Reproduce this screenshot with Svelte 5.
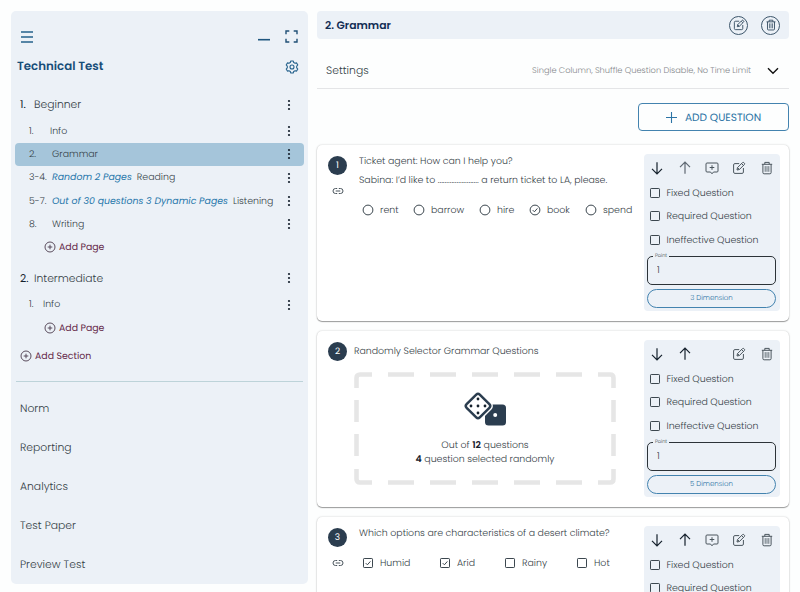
<script lang="ts">
  interface Page {
    no: string;
    title: string;
    rule?: string;
    active?: boolean;
  }

  interface Section {
    title: string;
    compact?: boolean;
    pages: Page[];
  }

  interface Option {
    label: string;
    width: number;
    checked?: boolean;
  }

  interface Question {
    kind: 'radio' | 'checkbox' | 'random';
    lines: string[];
    options: Option[];
    dimension: number;
    first?: boolean;
  }

  const sections: Section[] = [
    {
      title: 'Beginner',
      pages: [
        { no: '1.', title: 'Info' },
        { no: '2.', title: 'Grammar', active: true },
        { no: '3-4.', title: 'Reading', rule: 'Random 2 Pages' },
        { no: '5-7.', title: 'Listening', rule: 'Out of 30 questions 3 Dynamic Pages' },
        { no: '8.', title: 'Writing' }
      ]
    },
    { title: 'Intermediate', compact: true, pages: [{ no: '1.', title: 'Info' }] }
  ];

  const links = ['Norm', 'Reporting', 'Analytics', 'Test Paper', 'Preview Test'];
  const flags = ['Fixed Question', 'Required Question', 'Ineffective Question'];

  const questions: Question[] = [
    {
      kind: 'radio',
      first: true,
      lines: [
        'Ticket agent: How can I help you?',
        'Sabina: I’d like to ........................ a return ticket to LA, please.'
      ],
      options: [
        { label: 'rent', width: 51 },
        { label: 'barrow', width: 66 },
        { label: 'hire', width: 50 },
        { label: 'book', width: 56, checked: true },
        { label: 'spend', width: 50 }
      ],
      dimension: 3
    },
    { kind: 'random', lines: ['Randomly Selector Grammar Questions'], options: [], dimension: 5 },
    {
      kind: 'checkbox',
      lines: ['Which options are characteristics of a desert climate?'],
      options: [
        { label: 'Humid', width: 77, checked: true },
        { label: 'Arid', width: 65, checked: true },
        { label: 'Rainy', width: 72 },
        { label: 'Hot', width: 40 }
      ],
      dimension: 3
    }
  ];
</script>

{#snippet dots()}
  <svg class="dots" viewBox="0 0 4 12" fill="#14202c">
    <circle cx="2" cy="2" r="1.1" /><circle cx="2" cy="6" r="1.1" /><circle cx="2" cy="10" r="1.1" />
  </svg>
{/snippet}

{#snippet plusCircle()}
  <svg width="12" height="12" viewBox="0 0 12 12" fill="none" stroke="#4a3a4c" stroke-width="0.9">
    <circle cx="6" cy="6" r="5" /><path d="M6 3.7v4.6M3.7 6h4.6" />
  </svg>
{/snippet}

{#snippet edit()}
  <svg width="14" height="14" viewBox="0 0 14 14" fill="none" stroke="currentColor" stroke-width="1" stroke-linejoin="round">
    <path d="M7.2 2.6H2.9Q1.6 2.6 1.6 3.9v7.2q0 1.3 1.3 1.3h7.2q1.3 0 1.3-1.3V7" />
    <path d="M5 9l.5-2.4 5-5q.6-.6 1.3 0l.6.6q.6.7 0 1.3l-5 5zM9.6 2.6l1.8 1.8M5.6 6.7l1.7 1.7" />
  </svg>
{/snippet}

{#snippet trash()}
  <svg width="14" height="14" viewBox="0 0 14 14" fill="none" stroke="currentColor" stroke-width="1" stroke-linejoin="round">
    <path d="M1.8 3.3h10.4M4.8 3.2V1.4h4.4v1.8M2.9 3.4v8.2q0 1.2 1.2 1.2h5.8q1.2 0 1.2-1.2V3.4" />
    <path d="M5.2 5.1v5.7M7 5.1v5.7M8.8 5.1v5.7" stroke-width="0.8" />
  </svg>
{/snippet}

{#snippet box(checked: boolean, round: boolean)}
  <svg width="12" height="12" viewBox="0 0 12 12" fill="none" stroke="#3c474f" stroke-width="1">
    {#if round}
      <circle cx="6" cy="6" r="4.9" />
    {:else}
      <rect x="1.5" y="1.5" width="9" height="9" rx="0.7" />
    {/if}
    {#if checked}<path d="M3.7 6.1l1.7 1.7 3-3.4" />{/if}
  </svg>
{/snippet}

<div class="app">
  <aside class="sidebar">
    <div class="tools">
      <svg width="14" height="12" viewBox="0 0 14 12" stroke="#24618c" stroke-width="1.3">
        <path d="M1 1h12M1 6h12M1 11h12" />
      </svg>
      <svg class="minimize" width="12" height="12" viewBox="0 0 12 12" stroke="#1f567f" stroke-width="1.6">
        <path d="M0 8.7h12" />
      </svg>
      <svg width="13" height="13" viewBox="0 0 13 13" fill="none" stroke="#1f4f75" stroke-width="1.4">
        <path d="M1 4.3V1h3.3M8.7 1H12v3.3M12 8.7V12H8.7M4.3 12H1V8.7" />
      </svg>
    </div>
    <div class="test-title">
      <h1>Technical Test</h1>
      <svg width="14" height="14" viewBox="0 0 14 14" fill="none" stroke="#24618c" stroke-width="1.1" stroke-linejoin="round">
        <path d="M5.3 2.5L5.8 1h2.4l.5 1.5 1.4.8 1.5-.4 1.2 2.1-1.1 1.2v1.6l1.1 1.2-1.2 2.1-1.5-.4-1.4.8-.5 1.5H5.8l-.5-1.5-1.4-.8-1.5.4L1.2 9l1.1-1.2V6.2L1.2 5l1.2-2.1 1.5.4z" />
        <circle cx="7" cy="7" r="2" />
      </svg>
    </div>

    {#each sections as section, i}
      <section class:compact={section.compact}>
        <div class="section-row">
          <b>{i + 1}.</b>
          <span>{section.title}</span>
          {@render dots()}
        </div>
        {#each section.pages as page, p}
          <div class="page-row" class:active={page.active} class:lead={p === 0}>
            <span class="no">{page.no}</span>
            {#if page.rule}<em>{page.rule}</em>{/if}
            <span>{page.title}</span>
            {@render dots()}
          </div>
        {/each}
        <button class="add add-page">{@render plusCircle()}<span>Add Page</span></button>
      </section>
    {/each}
    <button class="add">{@render plusCircle()}<span>Add Section</span></button>

    <nav>
      {#each links as link}
        <a href="#top">{link}</a>
      {/each}
    </nav>
  </aside>

  <main>
    <header>
      <h2>2. Grammar</h2>
      <button class="round">{@render edit()}</button>
      <button class="round">{@render trash()}</button>
    </header>

    <div class="settings">
      <span>Settings</span>
      <small>Single Column, Shuffle Question Disable, No Time Limit</small>
      <svg width="12" height="8" viewBox="0 0 12 8" fill="none" stroke="#111" stroke-width="1.4">
        <path d="M1 1.2l5 5 5-5" />
      </svg>
    </div>

    <button class="add-question">
      <svg width="11" height="11" viewBox="0 0 11 11" stroke="currentColor" stroke-width="1.1"><path d="M5.5 0v11M0 5.5h11" /></svg>
      <span>ADD QUESTION</span>
    </button>

    {#each questions as question, i}
      <article>
        <div class="marker">
          <span class="badge">{i + 1}</span>
          {#if question.kind !== 'random'}
            <svg width="12" height="8" viewBox="0 0 12 8" fill="none" stroke="#4a555d" stroke-width="1">
              <path d="M5.2 1.5H3.5a2.5 2.5 0 0 0 0 5h1.7M6.8 1.5h1.7a2.5 2.5 0 0 1 0 5H6.8M3.7 4h4.6" />
            </svg>
          {/if}
        </div>

        <div class="body {question.kind}">
          {#each question.lines as line}
            <p>{line}</p>
          {/each}
          {#if question.kind === 'random'}
            <div class="random-box">
              <svg class="dashes" viewBox="0 0 262 113" fill="none" stroke="#e6e6e6" stroke-width="4.6">
                <path d="M2.5 16V6q0-3.5 3.5-3.5h12M244 2.5h12q3.5 0 3.5 3.5v10M259.5 97v10q0 3.5-3.5 3.5h-12M18 110.5H6q-3.5 0-3.5-3.5V97" />
                <path d="M34 2.5h26M76 2.5h26M118 2.5h26M160 2.5h26M202 2.5h26M34 110.5h26M76 110.5h26M118 110.5h26M160 110.5h26M202 110.5h26" />
                <path d="M2.5 28v22M2.5 62v22M259.5 28v22M259.5 62v22" />
              </svg>
              <svg class="dice" width="42" height="34" viewBox="0 0 42 34">
                <rect x="21" y="12.5" width="21" height="21" rx="3.5" fill="#2b3d4f" />
                <rect x="4.5" y="4.5" width="19" height="19" rx="2.5" transform="rotate(45 14 14)" fill="#fff" stroke="#fff" stroke-width="5" />
                <rect x="4.7" y="4.7" width="18.6" height="18.6" rx="2.5" transform="rotate(45 14 14)" fill="#fff" stroke="#2b3d4f" stroke-width="2.5" />
                <g fill="#14202c">
                  <circle cx="14" cy="7" r="1.4" /><circle cx="7" cy="14" r="1.4" /><circle cx="14" cy="14" r="1.4" />
                  <circle cx="21" cy="14" r="1.4" /><circle cx="14" cy="21" r="1.4" />
                </g>
                <circle cx="31.2" cy="23" r="2" fill="#fff" />
              </svg>
              <div>Out of <b>12</b> questions</div>
              <div><b>4</b> question selected randomly</div>
            </div>
          {:else}
            <div class="options">
              {#each question.options as option}
                <span class="option" style="width: {option.width}px">
                  {@render box(!!option.checked, question.kind === 'radio')}
                  <span>{option.label}</span>
                </span>
              {/each}
            </div>
          {/if}
        </div>

        <div class="panel">
          <div class="actions">
            <svg width="12" height="14" viewBox="0 0 12 14" fill="none" stroke="#14202c" stroke-width="1.2"><path d="M6 1.2v11.3M1 7.8l5 5 5-5" /></svg>
            <svg class:muted={question.first} width="12" height="14" viewBox="0 0 12 14" fill="none" stroke="#14202c" stroke-width="1.2"><path d="M6 12.8V1.5M1 6.2l5-5 5 5" /></svg>
            {#if question.kind !== 'random'}
              <svg width="14" height="14" viewBox="0 0 14 14" fill="none" stroke="#4a555d" stroke-width="1" stroke-linejoin="round">
                <path d="M2 2h10q1 0 1 1v7q0 1-1 1H8.5L7 12.8 5.5 11H2q-1 0-1-1V3q0-1 1-1zM7 4.2v4.6M4.7 6.5h4.6" />
              </svg>
            {:else}
              <i></i>
            {/if}
            {@render edit()}
            {@render trash()}
          </div>
          {#each flags as flag}
            <div class="flag">{@render box(false, false)}<span>{flag}</span></div>
          {/each}
          <div class="point">
            <label for="point-{i}">Point</label>
            <input id="point-{i}" value="1" />
          </div>
          <button class="dimension">{question.dimension} Dimension</button>
        </div>
      </article>
    {/each}
  </main>
</div>

<style>
  :global(body) {
    background: #fdfefe;
    overflow: hidden;
  }

  .app {
    display: flex;
    gap: 9px;
    box-sizing: border-box;
    width: 800px;
    height: 592px;
    padding: 11px 11px 0;
    overflow: hidden;
    font-family: Poppins, Inter, 'Open Sans', sans-serif;
    font-size: 9.4px;
    font-weight: 300;
    color: #343e46;
    text-rendering: geometricPrecision;
  }

  .app * {
    box-sizing: border-box;
  }

  svg {
    flex: none;
    display: block;
  }

  button {
    padding: 0;
    border: 0;
    background: none;
    font: inherit;
    color: inherit;
    text-rendering: inherit;
  }

  .page-row span,
  .page-row em,
  .add span,
  .option span,
  .flag span {
    padding-top: 1.4px;
  }

  .sidebar {
    flex: none;
    width: 297px;
    height: 573px;
    border-radius: 5px;
    background: #ecf1f7;
  }

  .tools {
    display: flex;
    align-items: center;
    height: 20px;
    margin-top: 15.5px;
    padding: 0 10px 0 9px;
  }

  .minimize {
    margin: 0 15px 0 auto;
  }

  .test-title {
    display: flex;
    align-items: center;
    justify-content: space-between;
    height: 20px;
    margin: 10px 9px 13px 6px;
  }

  h1 {
    margin: 0;
    padding-top: 1.6px;
    font-size: 11.8px;
    font-weight: 600;
    color: #174d78;
  }

  .section-row {
    display: flex;
    align-items: center;
    height: 30px;
    padding: 0 17px 0 9px;
    font-size: 10.8px;
  }

  .section-row b {
    width: 14px;
    font-weight: 400;
    color: #14202c;
  }

  .compact .section-row span,
  .compact .section-row b {
    padding-top: 1px;
  }

  .dots {
    width: 4px;
    height: 12px;
    margin-left: auto;
  }

  .page-row {
    display: flex;
    align-items: center;
    height: 23.25px;
    margin: 0 4px;
    padding: 0 13px 0 14px;
    border-radius: 4px;
  }

  .page-row.active {
    background: #a5c5da;
  }

  .no {
    width: 23px;
  }

  .lead .no {
    width: 21px;
  }

  .compact .no {
    width: 14px;
  }

  .compact {
    margin-top: 4px;
  }

  em {
    margin-right: 5px;
    font-weight: 400;
    color: #2777ab;
  }

  .add {
    display: flex;
    align-items: center;
    gap: 3px;
    height: 23.25px;
    margin: 5px 0 0 9px;
    font-size: 9.4px;
    font-weight: 400;
    color: #642848;
  }

  .add-page {
    margin: 0 0 0 33px;
  }

  nav {
    display: flex;
    flex-direction: column;
    margin: 13px 5px 0;
    padding: 7.4px 4px;
    border-top: 1px solid #bdd3d9;
  }

  nav a {
    height: 39px;
    line-height: 39px;
    font-size: 10.8px;
    color: inherit;
    text-decoration: none;
  }

  main {
    flex: none;
    width: 472px;
  }

  header {
    display: flex;
    align-items: center;
    gap: 13px;
    height: 28px;
    padding: 0 9px 0 8px;
    border-radius: 4px;
    background: #ecf1f7;
  }

  h2 {
    margin: 1px auto 0 0;
    font-size: 10.8px;
    font-weight: 600;
    color: #122d54;
  }

  .round {
    display: grid;
    place-items: center;
    width: 19px;
    height: 19px;
    border: 1px solid #3d566b;
    border-radius: 50%;
    color: #2b4459;
  }

  .round :global(svg) {
    width: 12px;
    height: 12px;
  }

  .settings {
    display: flex;
    align-items: center;
    height: 38px;
    margin-top: 12px;
    padding: 2px 10px 0 9px;
    border-bottom: 1px solid #e4e5e7;
    font-size: 10.8px;
  }

  small {
    margin: 0 16px 0 auto;
    font-size: 8.25px;
    color: #85888c;
  }

  .add-question {
    display: flex;
    align-items: center;
    justify-content: center;
    gap: 8px;
    width: 151px;
    height: 28px;
    margin: 14px 0 14px auto;
    border: 1px solid #4383af;
    border-radius: 4px;
    font-size: 10.6px;
    font-weight: 400;
    color: #2c74a5;
  }

  .add-question span {
    padding-top: 1px;
  }

  article {
    display: flex;
    height: 176px;
    margin-bottom: 10px;
    padding: 9px 9px 0 11px;
    border-radius: 5px;
    background: #fff;
    box-shadow: 0 0 2px rgba(0, 0, 0, 0.22), 0 1px 1px rgba(0, 0, 0, 0.35);
  }

  .marker {
    display: flex;
    flex-direction: column;
    align-items: center;
    gap: 12px;
    width: 19px;
    padding-top: 2px;
  }

  .badge {
    width: 19px;
    height: 19px;
    border-radius: 50%;
    background: #2b3d4f;
    font-size: 9px;
    font-weight: 400;
    line-height: 20px;
    text-align: center;
    color: #fff;
  }

  .body {
    flex: 1;
    padding-left: 12px;
    white-space: nowrap;
  }

  p {
    height: 19px;
    margin: 0;
    line-height: 15.4px;
  }

  .options {
    display: flex;
    margin: 12px 0 0 3px;
  }

  .option {
    display: flex;
    flex: none;
    align-items: center;
    gap: 6px;
    height: 12px;
  }

  .body.random {
    padding-left: 7px;
  }

  .random p {
    padding-top: 4px;
  }

  .random-box {
    position: relative;
    width: 262px;
    height: 113px;
    margin-top: 13px;
    padding-top: 20px;
    line-height: 14px;
    text-align: center;
  }

  .random-box b {
    font-weight: 600;
    color: #14202c;
  }

  .dashes {
    position: absolute;
    inset: 0;
  }

  .dice {
    margin: 0 auto 12.7px;
  }

  .panel {
    flex: none;
    width: 136px;
    height: 157px;
    padding: 6px 4px 0 3px;
    border-radius: 4px;
    background: #ecf1f7;
  }

  .actions {
    display: grid;
    grid-template-columns: 28px 26px 27px 28px 18px;
    align-items: center;
    height: 16px;
    padding-left: 4px;
    margin-bottom: 6px;
    color: #4a555d;
  }

  .actions :global(svg) {
    margin-left: -0.5px;
  }

  .muted {
    opacity: 0.65;
  }

  .flag {
    display: flex;
    align-items: center;
    gap: 5.5px;
    height: 23.2px;
    padding-left: 2px;
  }

  .flag :global(svg) {
    margin-top: -0.6px;
  }

  .point {
    position: relative;
    margin-top: 4px;
  }

  .point label {
    position: absolute;
    top: -3.4px;
    left: 6px;
    padding: 0 2px;
    background: #ecf1f7;
    font-size: 5px;
    line-height: 8px;
  }

  .point input {
    display: block;
    width: 129px;
    height: 29px;
    padding: 1.4px 9px 0;
    border: 1px solid #2c3338;
    border-radius: 5px;
    background: none;
    font: inherit;
    color: inherit;
    text-rendering: inherit;
  }

  .dimension {
    display: block;
    width: 129px;
    height: 19px;
    margin-top: 4px;
    padding-top: 1.4px;
    border: 1px solid #4383af;
    border-radius: 10px;
    font-size: 7px;
    color: #2c74a5;
  }
</style>
